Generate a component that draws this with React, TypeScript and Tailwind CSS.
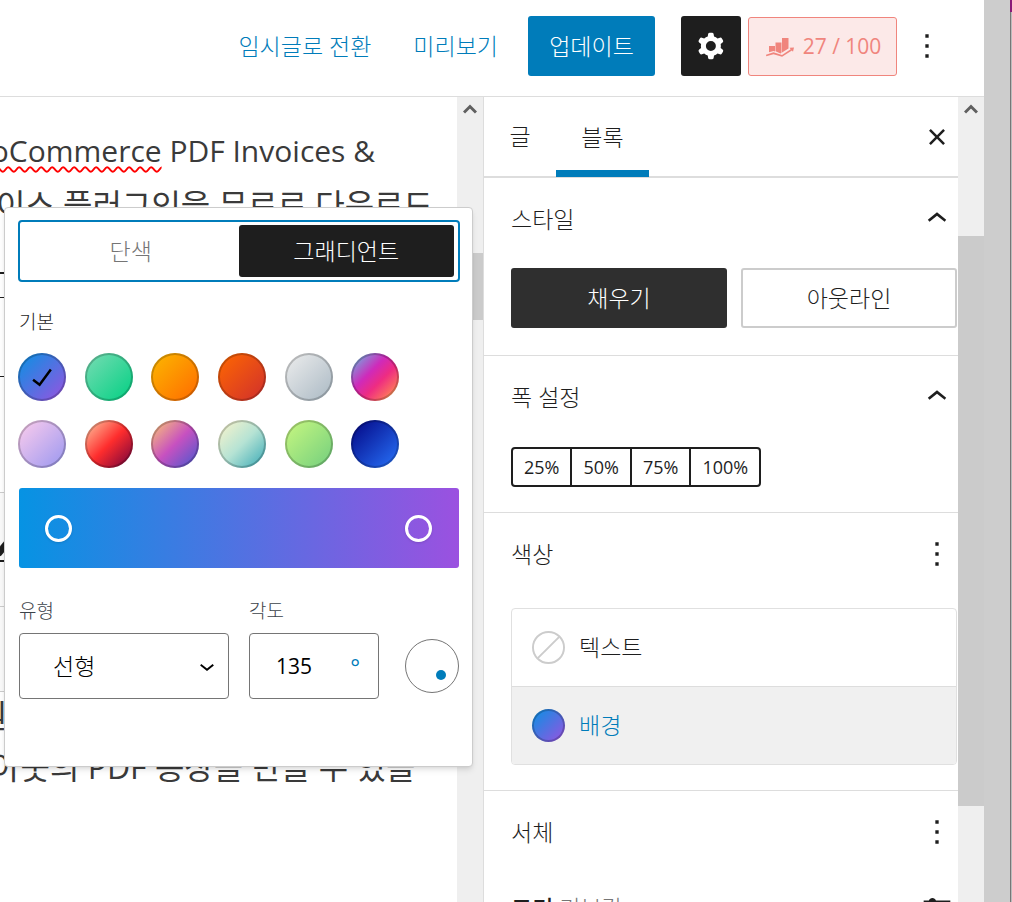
import { useState } from "react";
import clsx from "clsx";

const PRESETS = [
  { name: "blue-purple", className: "bg-[linear-gradient(135deg,#0693e3,#9b51e0)]" },
  { name: "green-cyan", className: "bg-[linear-gradient(135deg,#7adcb4,#00d082)]" },
  { name: "amber-orange", className: "bg-[linear-gradient(135deg,#fcb900,#ff6900)]" },
  { name: "orange-red", className: "bg-[linear-gradient(135deg,#ff6900,#cf2e2e)]" },
  { name: "gray", className: "bg-[linear-gradient(135deg,#eeeeee,#a9b8c3)]" },
  { name: "cool-warm", className: "bg-[linear-gradient(135deg,#4aeadc_0%,#9778d1_20%,#cf2aba_40%,#ee2c82_60%,#fb6962_80%,#fef84c_100%)]" },
  { name: "light-purple", className: "bg-[linear-gradient(135deg,#ffceec,#9896f0)]" },
  { name: "bordeaux", className: "bg-[linear-gradient(135deg,#fecda5_0%,#fe2d2d_50%,#6b003e_100%)]" },
  { name: "dusk", className: "bg-[linear-gradient(135deg,#ffcb70_0%,#c751c0_50%,#4158d0_100%)]" },
  { name: "pale-ocean", className: "bg-[linear-gradient(135deg,#fff5cb_0%,#b6e3d4_50%,#33a7b5_100%)]" },
  { name: "grass", className: "bg-[linear-gradient(135deg,#caf880,#71ce7e)]" },
  { name: "midnight", className: "bg-[linear-gradient(135deg,#020381,#2874fc)]" },
];

const WIDTHS = ["25%", "50%", "75%", "100%"];

const PATHS = {
  up: "M6.5 12.4L12 8l5.5 4.4-.9 1.2L12 10l-4.5 3.6-1-1.2z",
  down: "M17.5 11.6L12 16l-5.5-4.4.9-1.2L12 14l4.5-3.6 1 1.2z",
  more: "M13 19h-2v-2h2v2zm0-6h-2v-2h2v2zm0-6h-2V5h2v2z",
  close: "M12 13.06l3.712 3.713 1.061-1.06L13.061 12l3.712-3.712-1.06-1.06L12 10.938 8.288 7.227l-1.061 1.06L10.939 12l-3.712 3.712 1.06 1.061L12 13.061z",
  check: "M16.7 7.1l-6.3 8.5-3.3-2.5-.9 1.2 4.5 3.4L17.9 8z",
  sliders: "M19 7.5h-7.628c-.309-.874-1.142-1.5-2.122-1.5s-1.813.626-2.122 1.5H4V9h3.128c.309.874 1.142 1.5 2.122 1.5s1.813-.626 2.122-1.5H20V7.500z",
  cog: "M10.289 4.836A1 1 0 0111.275 4h1.306a1 1 0 01.987.836l.244 1.466c.787.26 1.503.679 2.108 1.218l1.393-.522a1 1 0 011.216.437l.653 1.13a1 1 0 01-.23 1.273l-1.148.944a6.025 6.025 0 010 2.435l1.149.946a1 1 0 01.23 1.272l-.653 1.13a1 1 0 01-1.216.437l-1.394-.522c-.605.54-1.32.958-2.108 1.218l-.244 1.466a1 1 0 01-.987.836h-1.306a1 1 0 01-.986-.836l-.244-1.466a5.995 5.995 0 01-2.108-1.218l-1.394.522a1 1 0 01-1.217-.436l-.653-1.131a1 1 0 01.23-1.272l1.149-.946a6.026 6.026 0 010-2.435l-1.148-.944a1 1 0 01-.23-1.272l.653-1.131a1 1 0 011.217-.437l1.393.522a5.994 5.994 0 012.108-1.218l.244-1.466zM14.929 12a3 3 0 11-6 0 3 3 0 016 0z",
};

function Icon({ name, className = "size-10" }: { name: keyof typeof PATHS; className?: string }) {
  return (
    <svg viewBox="0 0 24 24" className={clsx("shrink-0", className)} fill="currentColor" aria-hidden="true">
      <path fillRule="evenodd" clipRule="evenodd" d={PATHS[name]} />
    </svg>
  );
}

function ScoreIcon() {
  return (
    <svg viewBox="0 0 28 20" className="h-5 w-7" fill="currentColor" aria-hidden="true">
      <path d="M3 9h6v5.500l-1.500-.6L3 15.300zM9.500 5.500h6v10.200l-1 .8-5-2.300zM16 1h6.500v10.500L16 15.500z" />
      <path d="M0 17.800l7.500-2.600 8.500 2.900 8.700-5.900-1.200-1.500 4.500-.3-1 4.400-1.100-1.200-9.800 6.200-8.600-2.600L.3 19.200z" />
    </svg>
  );
}

function ScrollUpArrow() {
  return (
    <svg viewBox="0 0 14 10" className="h-[10px] w-[14px]" fill="none" stroke="#606060" strokeWidth="3" aria-hidden="true">
      <path d="M1 8.500l6-6 6 6" />
    </svg>
  );
}

function Header() {
  return (
    <header className="flex h-[97px] shrink-0 items-start justify-end border-b border-[#ddd] pt-4 pr-[37px]">
      <div className="flex h-[60px] items-center">
        <button className="mr-[42px] text-[#007cba]">임시글로 전환</button>
        <button className="mr-[30px] text-[#007cba]">미리보기</button>
        <button className="mr-[26px] h-[60px] w-[127px] rounded-[3px] bg-[#007cba] text-white">업데이트</button>
        <button aria-label="설정" className="mr-[7px] flex size-[60px] items-center justify-center rounded-[3px] bg-[#1e1e1e] text-white">
          <Icon name="cog" />
        </button>
        <button className="mr-[10px] flex h-[59px] w-[149px] items-center justify-center gap-[9px] rounded-[3px] border border-[#f0857d] bg-[#fce9e8] pt-[2px] pl-[2px] text-[21px] font-medium text-[#f0857d]">
          <ScoreIcon />
          <span>27 / 100</span>
        </button>
        <button aria-label="옵션" className="text-[#1e1e1e]"><Icon name="more" /></button>
      </div>
    </header>
  );
}

function Editor() {
  return (
    <main className="relative flex min-w-0 flex-1">
      <div className="min-w-0 flex-1 overflow-hidden text-[32px] font-normal whitespace-nowrap text-[#3a3a3a]">
        <p className="-ml-[55px] pt-[27px] text-[30px] leading-[54px]">
          <span className="underline decoration-[#f00] decoration-wavy decoration-2 underline-offset-4">WooCommerce</span> PDF Invoices &amp;
        </p>
        <p className="-ml-[63px] leading-[54px]">인보이스 플러그인을 무료로 다운로드</p>
        <div className="mt-10 h-[26px] border-t-2 border-b border-[#1e1e1e]" />
        <div className="h-[79px] border-b border-[#1e1e1e]" />
        <div className="h-[116px] border-b border-[#ccc]" />
        <div className="flex h-[69px] flex-col justify-end border-b-2 border-[#1e1e1e] bg-[#fafafa]">
          <svg viewBox="0 0 8 24" className="h-6 w-2" aria-hidden="true"><path d="M-2 18L8 6" stroke="#1e1e1e" strokeWidth="7" /></svg>
        </div>
        <div className="h-[45px] border-b border-[#ccc] bg-[#fafafa]" />
        <div className="h-[85px] border-b border-[#ccc] bg-[#fafafa]" />
        <p className="-ml-[22px] leading-[48px]">원</p>
        <p className="-ml-[9px] leading-[54px]">아웃의 PDF 송장을 만들 수 있을</p>
      </div>
      <div className="flex w-[26px] shrink-0 flex-col items-center bg-[#efefef] pt-[7px]">
        <ScrollUpArrow />
        <div className="mt-[139px] h-[67px] w-full bg-[#cbcbcb]" />
      </div>
      <GradientPopover />
    </main>
  );
}

function GradientPopover() {
  const [mode, setMode] = useState("gradient");
  const [selected, setSelected] = useState("blue-purple");

  return (
    <div className="absolute top-[110px] right-[10px] z-10 w-[469px] rounded-[4px] border border-[#ccc] bg-white pt-3 pr-[13px] pb-[67px] pl-[14px] shadow-md">
      <div className="-mx-px flex h-[62px] rounded-[4px] border-2 border-[#007cba] p-[3px] pr-1">
        {[["solid", "단색"], ["gradient", "그래디언트"]].map(([key, label]) => (
          <button
            key={key}
            onClick={() => setMode(key)}
            className={clsx("flex-1 rounded-[3px]", mode === key ? "bg-[#1e1e1e] text-white" : "text-[#757575]")}
          >
            {label}
          </button>
        ))}
      </div>

      <h3 className="mt-[26px] text-[19px] leading-7 text-[#1e1e1e]">기본</h3>
      <div className="mt-[17px] -ml-px grid w-[400px] grid-cols-6 gap-y-[19px]">
        {PRESETS.map((p) => (
          <button
            key={p.name}
            aria-label={p.name}
            onClick={() => setSelected(p.name)}
            className={clsx("flex size-12 items-center justify-center rounded-full text-black inset-ring-2 inset-ring-black/20", p.className)}
          >
            {selected === p.name && <Icon name="check" />}
          </button>
        ))}
      </div>

      <div className="mt-5 flex h-20 items-center justify-between rounded-[3px] bg-[linear-gradient(90deg,#0693e3,#9b51e0)] pr-[27px] pl-[26px]">
        <button aria-label="시작 색상" className="size-[27px] rounded-full border-3 border-white shadow-sm" />
        <button aria-label="끝 색상" className="size-[27px] rounded-full border-3 border-white shadow-sm" />
      </div>

      <div className="mt-[29px] flex items-end">
        <div className="w-[210px]">
          <label htmlFor="gradient-type" className="block text-[19px] leading-7 text-[#3c434a]">유형</label>
          <div className="relative mt-2">
            <select id="gradient-type" className="h-[66px] w-full appearance-none rounded-[4px] border border-[#757575] bg-white pl-[33px] text-black">
              <option>선형</option>
              <option>방사형</option>
            </select>
            <Icon name="down" className="pointer-events-none absolute top-[18px] right-[7px] size-[30px] text-black" />
          </div>
        </div>
        <div className="ml-5 w-[130px]">
          <label htmlFor="gradient-angle" className="block text-[19px] leading-7 text-[#3c434a]">각도</label>
          <div className="mt-2 flex h-[66px] items-center rounded-[4px] border border-[#757575] pt-[2px] pr-[18px] pl-[26px] font-normal">
            <input id="gradient-angle" defaultValue="135" className="w-[60px] min-w-0 flex-1 text-[21px] text-black outline-none" />
            <span className="text-[#007cba]">°</span>
          </div>
        </div>
        <div className="mb-[6px] ml-[26px] flex size-[54px] items-end justify-end rounded-full border border-[#757575] p-3">
          <div className="size-[10px] rounded-full bg-[#007cba]" />
        </div>
      </div>
    </div>
  );
}

function PanelTitle({ title, icon }: { title: string; icon: "up" | "more" }) {
  return (
    <div className="flex h-[82px] items-center justify-between">
      <h2>{title}</h2>
      <button aria-label={title}><Icon name={icon} /></button>
    </div>
  );
}

function Sidebar() {
  const [style, setStyle] = useState("채우기");

  return (
    <aside className="flex w-[501px] shrink-0 border-l border-[#ddd] text-[#1e1e1e]">
      <div className="min-w-0 flex-1">
        <div className="flex h-[81px] border-b-2 border-[#ddd] pr-[1px]">
          <button className="w-[72px]">글</button>
          <button className="-mb-px w-[93px] border-t-7 border-b-7 border-t-transparent border-b-[#007cba]">블록</button>
          <button aria-label="닫기" className="ml-auto"><Icon name="close" /></button>
        </div>

        <section className="border-b border-[#ddd] pr-[1px] pb-[27px] pl-[27px]">
          <PanelTitle title="스타일" icon="up" />
          <div className="mt-2 grid grid-cols-2 gap-[14px]">
            {["채우기", "아웃라인"].map((label) => (
              <button
                key={label}
                onClick={() => setStyle(label)}
                className={clsx("h-[60px] rounded-[3px]", style === label ? "bg-[#2f2f2f] text-white" : "border-2 border-[#ccc]")}
              >
                {label}
              </button>
            ))}
          </div>
        </section>

        <section className="border-b border-[#ddd] pr-[1px] pb-[25px] pl-[27px]">
          <PanelTitle title="폭 설정" icon="up" />
          <div className="mt-[9px] flex w-fit divide-x-2 divide-[#1e1e1e] rounded-[4px] border-2 border-[#1e1e1e] text-[18px] font-normal">
            {WIDTHS.map((w) => (
              <button key={w} className="h-9 px-[11px]">{w}</button>
            ))}
          </div>
        </section>

        <section className="border-b border-[#ddd] pr-[1px] pb-[25px] pl-[27px]">
          <PanelTitle title="색상" icon="more" />
          <div className="mt-[13px] divide-y divide-[#ddd] overflow-hidden rounded-[4px] border border-[#e0e0e0]">
            <button className="flex h-[78px] w-full items-center gap-[14px] pl-5">
              <svg viewBox="0 0 34 34" className="size-[33px]" fill="none" stroke="#ccc" aria-hidden="true">
                <circle cx="17" cy="17" r="16" strokeWidth="2" />
                <path d="M6 28L28 6" strokeWidth="2" />
              </svg>
              텍스트
            </button>
            <button className="flex h-[77px] w-full items-center gap-[14px] bg-[#f0f0f0] pl-5 text-[#007cba]">
              <span className="size-[33px] rounded-full bg-[linear-gradient(135deg,#0693e3,#9b51e0)] inset-ring-2 inset-ring-black/20" />
              배경
            </button>
          </div>
        </section>

        <section className="pr-[1px] pl-[27px]">
          <PanelTitle title="서체" icon="more" />
          <div className="mt-[15px] flex h-10 items-center justify-between">
            <p className="font-medium">크기 <span className="font-light text-[#757575]">기본값</span></p>
            <button aria-label="사용자 정의 크기"><Icon name="sliders" /></button>
          </div>
        </section>
      </div>
      <div className="flex w-[26px] shrink-0 flex-col items-center bg-[#efefef] pt-[7px]">
        <ScrollUpArrow />
        <div className="mt-[122px] h-[570px] w-full bg-[#cbcbcb]" />
      </div>
    </aside>
  );
}

export default function App() {
  return (
    <div className="flex h-screen overflow-hidden bg-white font-['Open_Sans','Noto_Sans_CJK_KR',sans-serif] text-[23px] font-light">
      <div className="flex min-w-0 flex-1 flex-col">
        <Header />
        <div className="flex min-h-0 flex-1">
          <Editor />
          <Sidebar />
        </div>
      </div>
      <div className="w-[26px] shrink-0 bg-[#cdcdcd]" />
      <div className="w-[2px] shrink-0 border-l border-[#777] bg-[#bbb]">
        <div className="-ml-px h-3 bg-[#8a1a78]" />
      </div>
    </div>
  );
}
